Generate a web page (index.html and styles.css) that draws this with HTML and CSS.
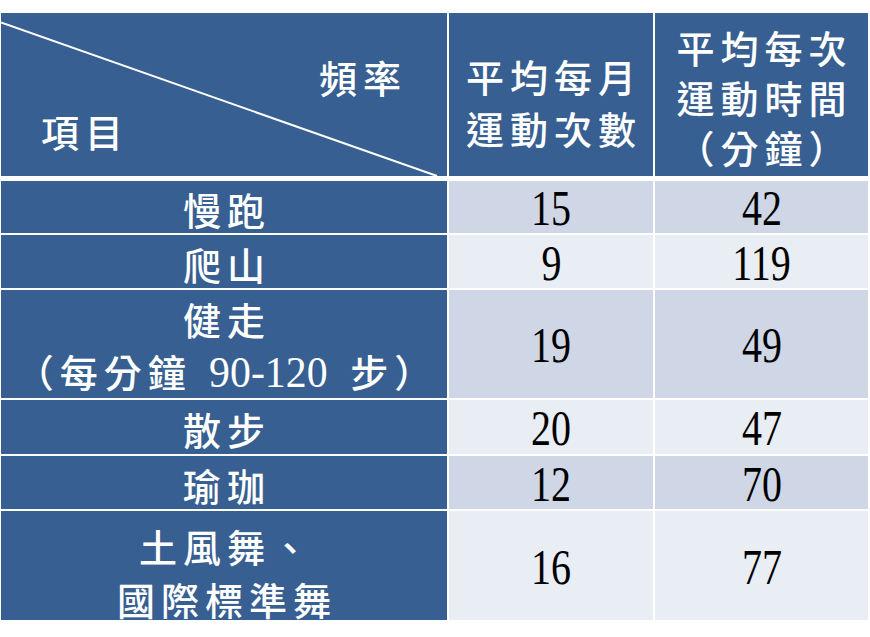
FILE: index.html
```html
<!DOCTYPE html>
<html lang="zh-Hant">
<head>
<meta charset="utf-8">
<link rel="stylesheet" href="styles.css">
</head>
<body>
<div class="table">
  <div class="grid head">
    <div class="cell hcorner">
      <svg class="diag" viewBox="0 0 446 163" preserveAspectRatio="none"><line x1="0" y1="9.5" x2="436" y2="163" stroke="#ffffff" stroke-width="2"/></svg>
      <div class="freq">頻率</div>
      <div class="item">項目</div>
    </div>
    <div class="cell hcol"><div class="lines">平均每月<br>運動次數</div></div>
    <div class="cell hcol c3"><div class="lines l3">平均每次<br>運動時間<br>（分鐘）</div></div>
  </div>
  <div class="grid body">
    <div class="cell name">慢跑</div>
    <div class="cell val dark"><span class="num">15</span></div>
    <div class="cell val dark"><span class="num">42</span></div>

    <div class="cell name">爬山</div>
    <div class="cell val light"><span class="num">9</span></div>
    <div class="cell val light"><span class="num">119</span></div>

    <div class="cell name"><div class="lines">健走<br><span class="nowrap">（每分鐘<span class="sp"></span><span class="dg">90-120</span><span class="sp"></span>步）</span></div></div>
    <div class="cell val dark"><span class="num">19</span></div>
    <div class="cell val dark"><span class="num">49</span></div>

    <div class="cell name">散步</div>
    <div class="cell val light"><span class="num">20</span></div>
    <div class="cell val light"><span class="num">47</span></div>

    <div class="cell name">瑜珈</div>
    <div class="cell val dark"><span class="num">12</span></div>
    <div class="cell val dark"><span class="num">70</span></div>

    <div class="cell name"><div class="lines l6">土風舞、<br>國際標準舞</div></div>
    <div class="cell val light"><span class="num">16</span></div>
    <div class="cell val light"><span class="num">77</span></div>
  </div>
</div>
</body>
</html>
```
FILE: styles.css
```css
html, body {
  margin: 0;
  padding: 0;
  background: #ffffff;
}
body {
  width: 870px;
  height: 637px;
  overflow: hidden;
}
.table {
  display: flex;
  flex-direction: column;
  gap: 5px;
  padding: 13px 0 0 1px;
}
.grid {
  display: grid;
  grid-template-columns: 446px 204px 213px;
  column-gap: 2px;
  row-gap: 2px;
}
.head {
  grid-template-rows: 163px;
}
.body {
  grid-template-rows: 52px 53px 108px 54px 53px 109px;
}
.cell {
  display: flex;
  align-items: center;
  justify-content: center;
  font-family: "Noto Sans CJK TC", "Noto Sans CJK SC", sans-serif;
  font-size: 38px;
  font-weight: 500;
  letter-spacing: 6px;
  color: #ffffff;
  text-align: center;
}
.hcorner, .hcol, .name {
  background: #375f91;
}
.hcorner {
  position: relative;
  flex-direction: column;
  align-items: stretch;
  justify-content: flex-start;
  padding: 0;
}
.diag {
  position: absolute;
  left: 0;
  top: 0;
  width: 446px;
  height: 163px;
}
.freq {
  text-align: right;
  padding-right: 40px;
  margin-top: 36px;
  line-height: 56px;
}
.item {
  text-align: left;
  padding-left: 40px;
  line-height: 56px;
  margin-top: -2px;
}
.hcol {
  padding-top: 14px;
  padding-left: 6px;
}
.c3 {
  padding-top: 4px;
}
.lines {
  line-height: 52px;
}
.l3 {
  line-height: 50px;
}
.name {
  padding-left: 6px;
  padding-top: 4px;
  line-height: 50px;
}
.l6 {
  line-height: 53px;
  padding-top: 8px;
}
.nowrap {
  white-space: nowrap;
}
.sp {
  display: inline-block;
  width: 14px;
}
.dg {
  font-family: "Liberation Serif", serif;
  font-size: 44px;
  font-weight: 400;
  letter-spacing: 0;
  margin-right: 6px;
  display: inline-block;
  transform: scaleX(0.95);
}
.val {
  color: #000000;
  letter-spacing: 0;
  font-weight: 400;
  padding-top: 2px;
}
.dark {
  background: #cfd7e6;
}
.light {
  background: #e9edf4;
}
.num {
  display: inline-block;
  font-family: "Liberation Serif", serif;
  font-size: 50px;
  line-height: 50px;
  transform: scaleX(0.8);
}
```
